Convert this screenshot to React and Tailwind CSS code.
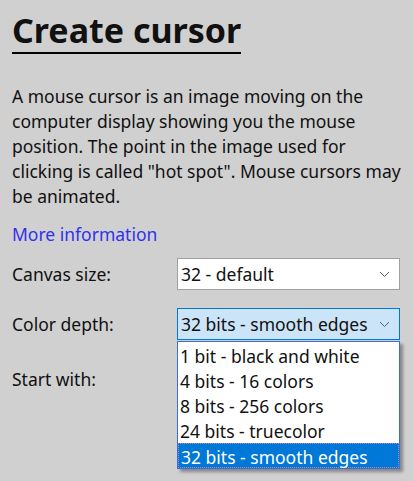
import React from "react";

const Chevron = () => (
  <svg width="11" height="7" viewBox="0 0 11 7" className="shrink-0">
    <path d="M1 1 L5.5 5.5 L10 1" fill="none" stroke="#606060" strokeWidth="1" />
  </svg>
);

export default function App() {
  const font = { fontFamily: '"Noto Sans", "Open Sans", sans-serif' };
  const options = [
    "1 bit - black and white",
    "4 bits - 16 colors",
    "8 bits - 256 colors",
    "24 bits - truecolor",
    "32 bits - smooth edges",
  ];
  return (
    <div className="w-[413px] h-[481px] bg-[#d0d0d0] text-[#111] overflow-hidden" style={font}>
      <div className="pl-3 pr-2 pt-[9px]">
        <h1 className="inline-block text-[34px] font-bold leading-[43px] border-b-2 border-black">
          Create cursor
        </h1>
        <p className="mt-[30px] text-[17.5px] leading-[25px]">
          A mouse cursor is an image moving on the computer display showing you the mouse position. The point in the image used for clicking is called "hot spot". Mouse cursors may be animated.
        </p>
        <div className="mt-[13px] text-[17.5px] leading-[25px] text-[#3030f0]">More information</div>
        <div className="mt-[11px] flex flex-col gap-[18px] text-[17.5px]">
          <div className="flex items-center">
            <div className="w-[165px]">Canvas size:</div>
            <div className="w-[223px] h-[32px] bg-white border border-[#a0a0a0] flex items-center justify-between pl-[3px] pr-[9px]">
              <span>32 - default</span>
              <Chevron />
            </div>
          </div>
          <div className="flex items-center">
            <div className="w-[165px]">Color depth:</div>
            <div className="relative w-[223px] h-[32px]">
              <div className="w-full h-full bg-[#cce4f7] border border-[#0078d7] flex items-center justify-between pl-[3px] pr-[9px]">
                <span>32 bits - smooth edges</span>
                <Chevron />
              </div>
              <div className="absolute left-0 top-[33px] w-[223px] pt-[1px] bg-white border border-[#3c6fd0] shadow-[3px_3px_3px_rgba(0,0,0,0.35)] z-10">
                {options.map((o, i) => (
                  <div
                    key={o}
                    className={
                      "h-[25px] leading-[25px] pl-[2px] pt-[1px] " +
                      (i === 4 ? "bg-[#0078d7] text-white border border-dotted border-[#c080c0] leading-[22px]" : "")
                    }
                  >
                    {o}
                  </div>
                ))}
              </div>
            </div>
          </div>
          <div className="flex items-center mt-[5px]">
            <div className="w-[165px]">Start with:</div>
            <div className="w-[223px] h-[32px]"></div>
          </div>
        </div>
      </div>
    </div>
  );
}
